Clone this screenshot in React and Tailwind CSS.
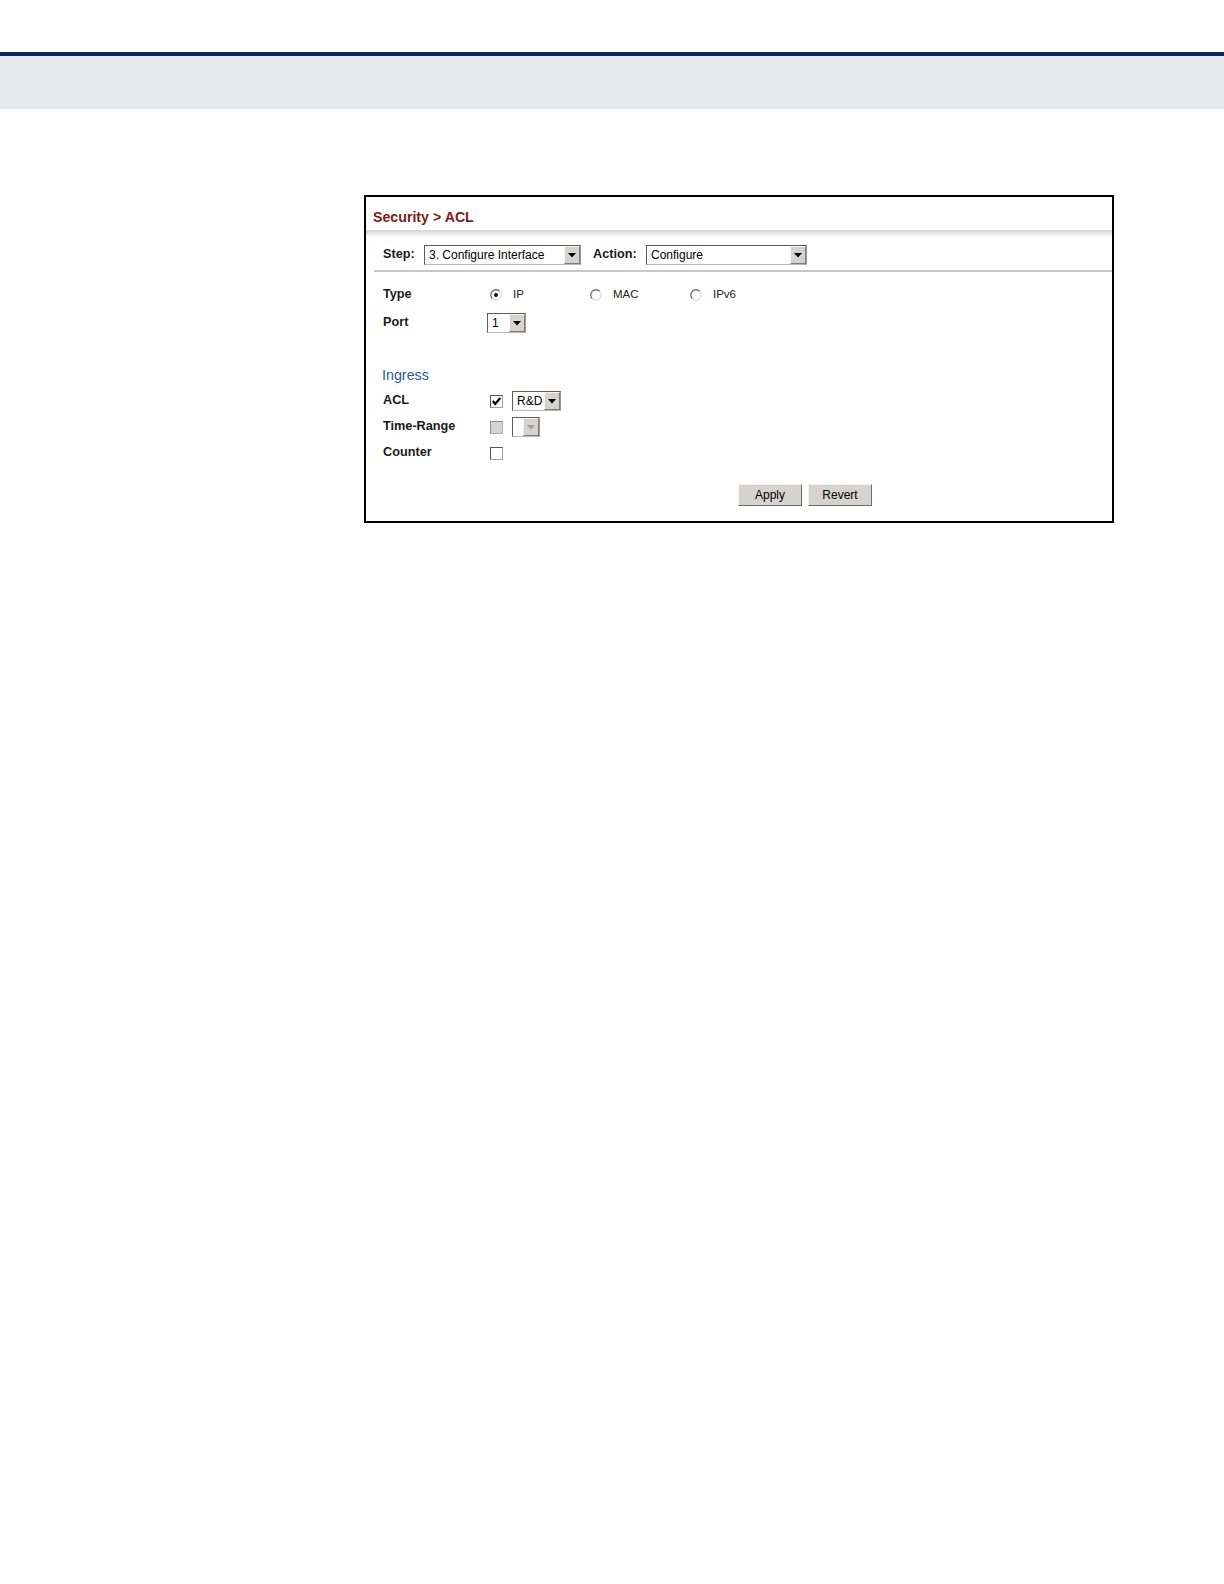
import React from "react";

const FONT = { fontFamily: '"Liberation Sans", Arial, sans-serif' };

function Arrow({ disabled }) {
  return (
    <span className="flex w-[16px] items-center justify-center border border-t-[#f6f6f6] border-l-[#f6f6f6] border-r-[#7b7b7b] border-b-[#7b7b7b] bg-[#d6d3ce]">
      <svg width="8" height="5" viewBox="0 0 8 5">
        <path d="M0 0 H8 L4 4.5 Z" fill={disabled ? "#a0a0a0" : "#000"} />
      </svg>
    </span>
  );
}

function Select({ value, className, disabled }) {
  return (
    <div
      className={`flex h-[20px] items-stretch border border-t-[#5c5c5c] border-l-[#5c5c5c] border-r-[#9a9a9a] border-b-[#b8b8b8] bg-white ${className}`}
    >
      <span className="flex-1 truncate pl-[4px] text-[12px] leading-[18px] text-black">
        {value}
      </span>
      <Arrow disabled={disabled} />
    </div>
  );
}

function Radio({ checked }) {
  return (
    <svg width="12" height="12" viewBox="0 0 12 12">
      <circle cx="6" cy="6" r="5" fill="#fff" />
      <path d="M2.3 9.7 A5 5 0 0 1 9.7 2.3" fill="none" stroke="#6e6e6e" strokeWidth="1.3" />
      <path d="M9.7 2.3 A5 5 0 0 1 2.3 9.7" fill="none" stroke="#d8d8d8" strokeWidth="1.2" />
      {checked && <circle cx="6" cy="6" r="2" fill="#111" />}
    </svg>
  );
}

function Checkbox({ checked, disabled }) {
  return (
    <svg width="13" height="13" viewBox="0 0 13 13">
      <rect x="0.5" y="0.5" width="12" height="12" fill={disabled ? "#d4d4d4" : "#fff"} stroke={disabled ? "#b0b0b0" : "#a0a0a0"} />
      <path d="M0.5 12.5 V0.5 H12.5" fill="none" stroke={disabled ? "#8e8e8e" : "#555"} />
      {checked && (
        <path d="M2.8 6 L5.2 9 L10.2 3" fill="none" stroke="#000" strokeWidth="2.1" />
      )}
    </svg>
  );
}

function Label({ children }) {
  return (
    <span className="w-[104px] shrink-0 text-[12.7px] font-bold text-[#1a1a1a]">{children}</span>
  );
}

function Button({ children }) {
  return (
    <button className="h-[22px] w-[64px] border border-t-[#f4f4f4] border-l-[#f4f4f4] border-r-[#6e6e6e] border-b-[#6e6e6e] bg-[#d6d3ce] text-[12px] text-black">
      {children}
    </button>
  );
}

export default function App() {
  return (
    <div className="min-h-[1584px] w-full bg-white" style={FONT}>
      <div className="h-[52px]" />
      <div className="h-[4px] bg-[#0c2461]" />
      <div className="h-[53px] bg-[#e6e9f0]" />

      <div className="ml-[364px] mt-[86px] w-[750px] border-2 border-black">
        {/* Title */}
        <div className="pl-[7px] pt-[12px] text-[14.2px] font-bold leading-[16px] text-[#7b1d1d]">
          Security &gt; ACL
        </div>
        <div className="mt-[5px] h-[7px] bg-gradient-to-b from-[#d2d2d2] to-white" />

        {/* Step / Action */}
        <div className="mt-[8px] flex h-[20px] items-center pl-[17px]">
          <span className="w-[41px] text-[12.7px] font-bold text-[#1a1a1a]">Step:</span>
          <Select value="3. Configure Interface" className="w-[157px]" />
          <span className="ml-[12px] w-[53px] text-[12.7px] font-bold text-[#1a1a1a]">Action:</span>
          <Select value="Configure" className="w-[161px]" />
        </div>
        <div className="ml-[8px] mt-[5px] h-[2px] bg-[#c8c8c8]" />

        {/* Type */}
        <div className="mt-[13px] flex h-[20px] items-center pl-[17px]">
          <Label>Type</Label>
          {[
            { t: "IP", c: true },
            { t: "MAC", c: false },
            { t: "IPv6", c: false },
          ].map((o) => (
            <span key={o.t} className="flex w-[100px] items-center pl-[3px]">
              <Radio checked={o.c} />
              <span className="ml-[11px] text-[11.5px] text-[#222]">{o.t}</span>
            </span>
          ))}
        </div>

        {/* Port */}
        <div className="mt-[8px] flex h-[20px] items-center pl-[17px]">
          <Label>Port</Label>
          <Select value="1" className="w-[39px]" />
        </div>

        {/* Ingress */}
        <div className="mt-[33px] pl-[16px] text-[14.3px] leading-[18px] text-[#2c5a9c]">Ingress</div>

        <div className="mt-[7px] flex h-[20px] items-center pl-[17px]">
          <Label>ACL</Label>
          <span className="ml-[3px] flex items-center">
            <Checkbox checked />
          </span>
          <Select value="R&D" className="ml-[9px] w-[49px]" />
        </div>

        <div className="mt-[6px] flex h-[20px] items-center pl-[17px]">
          <Label>Time-Range</Label>
          <span className="ml-[3px] flex items-center">
            <Checkbox disabled />
          </span>
          <Select value="" className="ml-[9px] w-[28px]" disabled />
        </div>

        <div className="mt-[6px] flex h-[20px] items-center pl-[17px]">
          <Label>Counter</Label>
          <span className="ml-[3px] flex items-center">
            <Checkbox />
          </span>
        </div>

        {/* Buttons */}
        <div className="mt-[21px] flex gap-[6px] pb-[15px] pl-[372px]">
          <Button>Apply</Button>
          <Button>Revert</Button>
        </div>
      </div>
    </div>
  );
}
